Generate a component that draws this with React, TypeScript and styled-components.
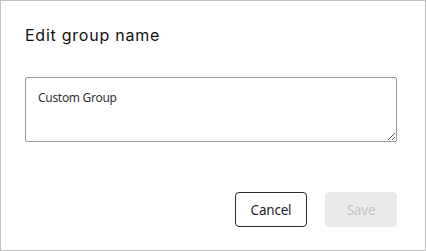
import React from "react";
import styled, { createGlobalStyle } from "styled-components";

const Global = createGlobalStyle`
  html, body { margin: 0; padding: 0; background: #ffffff; }
  * { box-sizing: border-box; }
`;

const Dialog = styled.div`
  width: 426px;
  height: 251px;
  border: 1px solid #c2c2c2;
  background: #ffffff;
  display: flex;
  flex-direction: column;
  padding: 22px 28px 23px 24px;
  font-family: "Noto Sans", sans-serif;
`;

const Title = styled.h2`
  margin: 0;
  font-family: Inter, "Noto Sans", sans-serif;
  font-weight: 400;
  font-size: 16px;
  letter-spacing: 0.75px;
  line-height: 24px;
  color: #111111;
`;

const NameField = styled.textarea`
  margin-top: 30px;
  width: 372px;
  height: 65px;
  border: 1px solid #9a9a9a;
  border-radius: 2px;
  padding: 12px 12px;
  font-family: "Noto Sans", sans-serif;
  font-size: 12px;
  letter-spacing: -0.3px;
  line-height: 16px;
  color: #333333;
  resize: both;
  outline: none;
`;

const Actions = styled.div`
  margin-top: auto;
  display: flex;
  justify-content: flex-end;
  gap: 18px;
`;

const Button = styled.button<{ $variant: "outline" | "disabled" }>`
  width: 72px;
  height: 35px;
  border-radius: 4px;
  font-family: "Noto Sans", sans-serif;
  font-size: 13.5px;
  letter-spacing: -0.2px;
  padding: 0;
  border: 1px solid ${(p) => (p.$variant === "outline" ? "#2b2b2b" : "#ebebeb")};
  background: ${(p) => (p.$variant === "outline" ? "#ffffff" : "#ebebeb")};
  color: ${(p) => (p.$variant === "outline" ? "#1f1f1f" : "#c3c3c3")};
`;

export default function App() {
  return (
    <>
      <Global />
      <Dialog>
        <Title>Edit group name</Title>
        <NameField defaultValue="Custom Group" />
        <Actions>
          <Button $variant="outline">Cancel</Button>
          <Button $variant="disabled" disabled>
            Save
          </Button>
        </Actions>
      </Dialog>
    </>
  );
}
